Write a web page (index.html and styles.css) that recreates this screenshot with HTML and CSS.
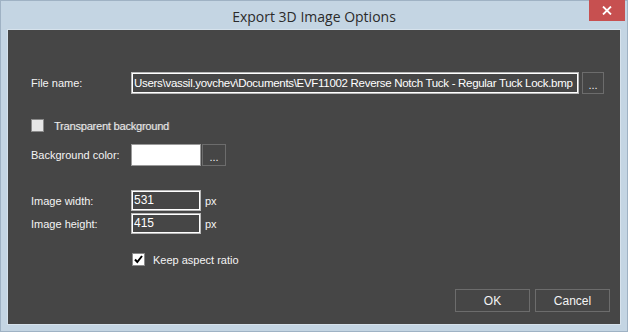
FILE: index.html
```html
<!DOCTYPE html>
<html>
<head>
<meta charset="utf-8">
<link rel="stylesheet" href="styles.css">
</head>
<body>
<div class="window">
  <div class="titlebar">
    <div class="title">Export 3D Image Options</div>
    <div class="close"><svg width="10" height="9" viewBox="0 0 10 9"><path d="M1 0.5 L9 8.5 M9 0.5 L1 8.5" stroke="#fff" stroke-width="1.8"/></svg></div>
  </div>
  <div class="content">
    <div class="row file-row">
      <div class="label">File name:</div>
      <div class="textbox file-box"><span>Users\vassil.yovchev\Documents\EVF11002 Reverse Notch Tuck - Regular Tuck Lock.bmp</span></div>
      <div class="dots file-dots">...</div>
    </div>
    <div class="check-row transparent-row">
      <div class="check unchecked"></div>
      <div class="check-label ghost">Transparent background</div>
    </div>
    <div class="row color-row">
      <div class="label">Background color:</div>
      <div class="swatch"></div>
      <div class="dots color-dots">...</div>
    </div>
    <div class="row size-row first">
      <div class="label">Image width:</div>
      <div class="textbox num-box"><span>531</span></div>
      <div class="unit">px</div>
    </div>
    <div class="row size-row second">
      <div class="label">Image height:</div>
      <div class="textbox num-box"><span>415</span></div>
      <div class="unit">px</div>
    </div>
    <div class="check-row aspect-row">
      <div class="check checked"><svg width="11" height="11" viewBox="0 0 11 11"><path d="M2 5.5 L4.3 8 L9 2" stroke="#000" stroke-width="2" fill="none"/></svg></div>
      <div class="check-label">Keep aspect ratio</div>
    </div>
    <div class="spacer"></div>
    <div class="buttons">
      <div class="btn">OK</div>
      <div class="btn">Cancel</div>
    </div>
  </div>
</div>
</body>
</html>
```
FILE: styles.css
```css
html, body {
  margin: 0;
  padding: 0;
  background: #c4d5e3;
}
.window {
  position: relative;
  width: 628px;
  height: 332px;
  box-sizing: border-box;
  background: #c4d5e3;
  border: 1px solid #9fb2c4;
  padding: 0 7px 7px 7px;
  display: flex;
  flex-direction: column;
}
.titlebar {
  height: 29px;
  display: flex;
  align-items: center;
  justify-content: center;
  flex: none;
}
.title {
  font-family: "Open Sans", "Noto Sans", sans-serif;
  font-size: 14px;
  color: #2b2b2b;
  margin-top: 1px;
}
.close {
  position: absolute;
  left: 588px;
  top: -1px;
  width: 36px;
  height: 21px;
  background: #c75050;
  display: flex;
  align-items: center;
  justify-content: center;
}
.content {
  flex: 1;
  background: #464646;
  outline: 1px solid #d6e2ec;
  display: flex;
  flex-direction: column;
  padding: 42px 10px 12px 23px;
  font-family: "Liberation Sans", Arial, sans-serif;
  font-size: 11px;
  color: #f4f4f4;
}
.row {
  display: flex;
  align-items: center;
  height: 22px;
  flex: none;
}
.label {
  width: 100px;
  flex: none;
}
.textbox {
  box-sizing: border-box;
  height: 22px;
  border: 1px solid #b9b9b9;
  box-shadow: inset 0 0 0 1px #ffffff;
  display: flex;
  align-items: center;
  overflow: hidden;
  white-space: nowrap;
  font-size: 12px;
  color: #ffffff;
  padding-left: 2px;
  flex: none;
}
.file-box {
  width: 448px;
  font-size: 11.5px;
  letter-spacing: -0.3px;
}
.dots {
  box-sizing: border-box;
  height: 22px;
  border: 1px solid #6c6c6c;
  display: flex;
  align-items: center;
  justify-content: center;
  font-size: 11px;
  color: #f0f0f0;
  padding-top: 3px;
  flex: none;
}
.file-dots {
  width: 22px;
  margin-left: 3px;
}
.check-row {
  display: flex;
  align-items: center;
  flex: none;
  height: 13px;
}
.transparent-row {
  margin-top: 25px;
}
.check {
  box-sizing: border-box;
  width: 13px;
  height: 13px;
  border: 1px solid #8a8a8a;
  flex: none;
  display: flex;
  align-items: center;
  justify-content: center;
}
.unchecked {
  background: #e6e6e6;
}
.checked {
  background: #ffffff;
}
.check-label {
  margin-left: 10px;
}
.ghost {
  color: #ececec;
  text-shadow: 1px 0 0 rgba(200,200,200,0.35);
  letter-spacing: -0.2px;
}
.aspect-row .check-label {
  margin-left: 8px;
}
.color-row {
  margin-top: 12px;
}
.swatch {
  box-sizing: border-box;
  width: 70px;
  height: 22px;
  background: #ffffff;
  border: 1px solid #9a9a9a;
  flex: none;
}
.color-dots {
  width: 24px;
  margin-left: 1px;
}
.size-row {
  height: 21px;
}
.size-row .textbox {
  height: 21px;
  width: 70px;
  align-items: flex-start;
  padding-top: 2px;
}
.size-row.first {
  margin-top: 24px;
}
.size-row.second {
  margin-top: 2px;
}
.unit {
  margin-left: 4px;
}
.aspect-row {
  margin-top: 19px;
  padding-left: 101px;
}
.spacer {
  flex: 1;
}
.buttons {
  display: flex;
  justify-content: flex-end;
  gap: 5px;
  flex: none;
}
.btn {
  box-sizing: border-box;
  width: 75px;
  height: 23px;
  border: 1px solid #6c6c6c;
  display: flex;
  align-items: center;
  justify-content: center;
  font-size: 12px;
  color: #f4f4f4;
}
```
